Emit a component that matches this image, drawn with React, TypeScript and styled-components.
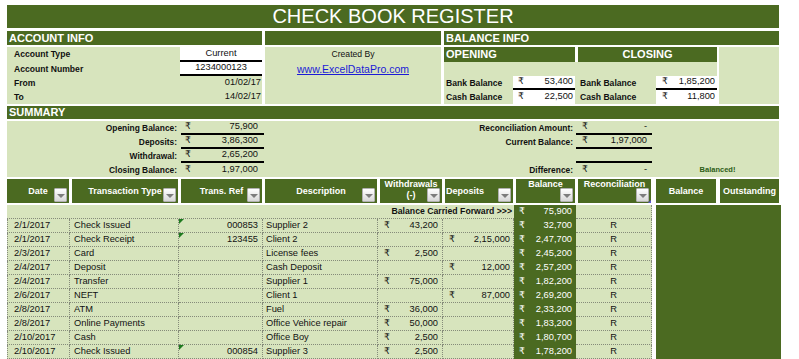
import React from "react";
import styled, { createGlobalStyle } from "styled-components";

const DARK = "#4b6a21";
const LIGHT = "#d7e4bd";
const DOT = "#858b7a";
const SANS = `"Liberation Sans", Arial, "DejaVu Sans", sans-serif`;

const GlobalStyle = createGlobalStyle`
  html, body { margin: 0; padding: 0; background: #ffffff; overflow: hidden; }
  body { font-family: ${SANS}; color: #111111; }
  #root { width: 799px; height: 359px; }
`;

const Sheet = styled.main`
  box-sizing: border-box;
  width: 799px;
  height: 359px;
  padding: 5px 0 0 7px;
  display: flex;
  flex-direction: column;
  overflow: hidden;
`;

const TitleBar = styled.h1`
  margin: 0 0 3px;
  width: 772px;
  height: 23px;
  flex: none;
  background: ${DARK};
  color: #ffffff;
  font: 400 20px/23px ${SANS};
  text-align: center;
`;

const BarRow = styled.div`
  display: flex;
  gap: 3px;
  flex: none;
  margin-bottom: 2px;
`;

const SectionBar = styled.div<{ $w: number; $h?: number }>`
  width: ${(p) => p.$w}px;
  height: ${(p) => p.$h ?? 14}px;
  flex: none;
  box-sizing: border-box;
  padding-left: 2px;
  background: ${DARK};
  color: #ffffff;
  font: 700 11px/${(p) => p.$h ?? 14}px ${SANS};
`;

/* ---------- account / balance info ---------- */

const InfoRow = styled.div`
  display: flex;
  gap: 3px;
  height: 57px;
  flex: none;
  margin-bottom: 2px;
`;

const AccountPanel = styled.div`
  width: 255px;
  flex: none;
  background: ${LIGHT};
  display: grid;
  grid-template-columns: 173px 82px;
  grid-template-rows: 15px 14px 14px 14px;
`;

const FieldLabel = styled.div`
  display: flex;
  align-items: center;
  padding-left: 7px;
  font: 700 8.6px/1 ${SANS};
`;

const FieldValue = styled.div<{ $boxed?: boolean; $underline?: boolean; $right?: boolean }>`
  box-sizing: border-box;
  display: flex;
  align-items: center;
  justify-content: ${(p) => (p.$right ? "flex-end" : "center")};
  padding-right: ${(p) => (p.$right ? 1 : 0)}px;
  background: ${(p) => (p.$boxed ? "#ffffff" : "transparent")};
  border-bottom: ${(p) => (p.$underline ? "2px solid #000000" : "none")};
  font: 400 9.3px/1 ${SANS};
`;

const CreatorPanel = styled.div`
  width: 176px;
  flex: none;
  background: ${LIGHT};
  display: grid;
  grid-template-rows: 15px 14px 14px 14px;
  justify-items: center;
  align-items: center;
`;

const CreatedBy = styled.div`
  font: 400 8.6px/1 ${SANS};
`;

const SiteLink = styled.a`
  color: #1b1bd6;
  text-decoration: underline;
  font: 400 10.5px/1 ${SANS};
`;

const BalancePanel = styled.div`
  width: 335px;
  flex: none;
  display: flex;
  gap: 2px;
`;

const BalanceGrid = styled.div`
  width: 273px;
  flex: none;
  background: ${LIGHT};
  display: grid;
  grid-template-columns: 69px 62px 3px 78px 61px;
  grid-template-rows: 15px 14px 14px 14px;
`;

const SubHeader = styled.div<{ $center?: boolean }>`
  grid-column: span 2;
  display: flex;
  align-items: center;
  justify-content: ${(p) => (p.$center ? "center" : "flex-start")};
  padding-left: ${(p) => (p.$center ? 0 : 2)}px;
  background: ${DARK};
  color: #ffffff;
  font: 700 11px/1 ${SANS};
`;

const HeaderGap = styled.div`
  background: #ffffff;
`;

const EmptyLine = styled.div`
  grid-column: 1 / -1;
`;

const BalanceLabel = styled.div`
  display: flex;
  align-items: center;
  padding-left: 2px;
  font: 700 8.6px/1 ${SANS};
  white-space: nowrap;
`;

const MoneyBox = styled.div<{ $underline?: boolean; $pl: number }>`
  box-sizing: border-box;
  display: flex;
  align-items: center;
  justify-content: space-between;
  padding: 0 2px 0 ${(p) => p.$pl}px;
  background: #ffffff;
  border-bottom: ${(p) => (p.$underline ? "2px solid #000000" : "none")};
  font: 400 9.3px/1 ${SANS};
`;

const Spacer = styled.div``;

const BalanceSide = styled.div`
  width: 60px;
  flex: none;
  background: ${LIGHT};
`;

/* ---------- summary ---------- */

const SummaryBody = styled.div`
  width: 772px;
  height: 56px;
  flex: none;
  margin-bottom: 2px;
  background: ${LIGHT};
  display: grid;
  grid-template-columns: 174px 83px 312px 76px 127px;
  grid-template-rows: repeat(4, 14px);
`;

const SumLabel = styled.div<{ $pr: number }>`
  display: flex;
  align-items: center;
  justify-content: flex-end;
  padding-right: ${(p) => p.$pr}px;
  font: 700 8.4px/1 ${SANS};
  white-space: nowrap;
`;

const SumValue = styled.div<{ $underline?: boolean; $pl: number; $pr: number }>`
  box-sizing: border-box;
  display: flex;
  align-items: center;
  justify-content: space-between;
  padding: 0 ${(p) => p.$pr}px 0 ${(p) => p.$pl}px;
  border-bottom: ${(p) => (p.$underline ? "2px solid #000000" : "none")};
  font: 400 9.3px/1 ${SANS};
`;

const StatusNote = styled.div`
  display: flex;
  align-items: center;
  justify-content: center;
  padding-left: 4px;
  color: #2c5d16;
  font: 700 7.5px/1 ${SANS};
`;

const Blank = styled.div``;

/* ---------- ledger header ---------- */

const HeadRow = styled.div`
  display: flex;
  gap: 3px;
  height: 24px;
  flex: none;
  margin-bottom: 2px;
`;

const HeadCell = styled.div<{ $w: number; $ml?: number }>`
  width: ${(p) => p.$w}px;
  flex: none;
  margin-left: ${(p) => p.$ml ?? 0}px;
  background: ${DARK};
  color: #ffffff;
  display: grid;
  grid-template: 1fr / 1fr;
  font: 700 9px/11px ${SANS};
  & > * {
    grid-area: 1 / 1;
  }
`;

const HeadText = styled.div<{ $top?: boolean; $left?: boolean }>`
  align-self: ${(p) => (p.$top ? "start" : "center")};
  text-align: ${(p) => (p.$left ? "left" : "center")};
  padding-left: ${(p) => (p.$left ? 1 : 0)}px;
  white-space: nowrap;
`;

const FilterButton = styled.span`
  justify-self: end;
  align-self: end;
  width: 13px;
  height: 14px;
  margin: 0 2px 1px 0;
  box-sizing: border-box;
  border: 1px solid #b0b0b0;
  border-radius: 1px;
  background: linear-gradient(#ffffff, #d8d8d8);
  display: flex;
  align-items: center;
  justify-content: center;
  &::after {
    content: "";
    margin-top: 1px;
    border-left: 4px solid transparent;
    border-right: 4px solid transparent;
    border-top: 4px solid #7d7d7d;
  }
`;

const SelectionMark = styled.span`
  justify-self: end;
  align-self: end;
  width: 0;
  height: 0;
  border-left: 3px solid transparent;
  border-bottom: 3px solid #5b55d0;
`;

/* ---------- ledger body ---------- */

const BodyArea = styled.div`
  display: flex;
  gap: 4px;
  flex: 1;
  min-height: 0;
`;

const Ledger = styled.div`
  width: 645px;
  flex: none;
  align-self: flex-start;
  display: grid;
  grid-template-columns: 63px 109px 84px 115px 65px 71px 62px 76px;
  grid-auto-rows: 14px;
  background: ${LIGHT};
  font: 400 9.3px/1 ${SANS};
`;

const CarryLabel = styled.div`
  grid-column: 1 / span 6;
  box-sizing: border-box;
  display: flex;
  align-items: center;
  justify-content: flex-end;
  padding-right: 2px;
  border-bottom: 1px dotted ${DOT};
  font: 700 8.7px/1 ${SANS};
  white-space: nowrap;
`;

type Justify = "flex-start" | "flex-end" | "center" | "space-between";

const Cell = styled.div<{
  $justify: Justify;
  $pl?: number;
  $pr?: number;
  $first?: boolean;
  $dark?: boolean;
}>`
  box-sizing: border-box;
  display: flex;
  align-items: center;
  justify-content: ${(p) => p.$justify};
  padding: 0 ${(p) => p.$pr ?? 0}px 0 ${(p) => p.$pl ?? 0}px;
  border-right: 1px dotted ${(p) => (p.$dark ? "transparent" : DOT)};
  border-bottom: 1px dotted ${(p) => (p.$dark ? "transparent" : DOT)};
  border-left: ${(p) => (p.$first ? `1px dotted ${DOT}` : "none")};
  background: ${(p) => (p.$dark ? DARK : "transparent")};
  color: ${(p) => (p.$dark ? "#ffffff" : "#111111")};
  white-space: nowrap;
  overflow: hidden;
`;

const RefCell = styled.div`
  box-sizing: border-box;
  display: grid;
  grid-template: 1fr / 1fr;
  border-right: 1px dotted ${DOT};
  border-bottom: 1px dotted ${DOT};
  & > * {
    grid-area: 1 / 1;
  }
`;

const RefText = styled.span`
  justify-self: end;
  align-self: center;
  padding-right: 4px;
`;

const CommentFlag = styled.span`
  justify-self: start;
  align-self: start;
  width: 0;
  height: 0;
  border-top: 5px solid #1e7a1e;
  border-right: 5px solid transparent;
`;

const RemainingBlock = styled.div`
  width: 125px;
  flex: none;
  background: ${DARK};
`;

type Entry = {
  date: string;
  type: string;
  ref?: string;
  desc: string;
  w?: string;
  d?: string;
  bal: string;
};

const entries: Entry[] = [
  { date: "2/1/2017", type: "Check Issued", ref: "000853", desc: "Supplier 2", w: "43,200", bal: "32,700" },
  { date: "2/1/2017", type: "Check Receipt", ref: "123455", desc: "Client 2", d: "2,15,000", bal: "2,47,700" },
  { date: "2/3/2017", type: "Card", desc: "License fees", w: "2,500", bal: "2,45,200" },
  { date: "2/4/2017", type: "Deposit", desc: "Cash Deposit", d: "12,000", bal: "2,57,200" },
  { date: "2/4/2017", type: "Transfer", desc: "Supplier 1", w: "75,000", bal: "1,82,200" },
  { date: "2/6/2017", type: "NEFT", desc: "Client 1", d: "87,000", bal: "2,69,200" },
  { date: "2/8/2017", type: "ATM", desc: "Fuel", w: "36,000", bal: "2,33,200" },
  { date: "2/8/2017", type: "Online Payments", desc: "Office Vehice repair", w: "50,000", bal: "1,83,200" },
  { date: "2/10/2017", type: "Cash", desc: "Office Boy", w: "2,500", bal: "1,80,700" },
  { date: "2/10/2017", type: "Check Issued", ref: "000854", desc: "Supplier 3", w: "2,500", bal: "1,78,200" },
];

const R = "₹";

function Money({ value }: { value: string }) {
  return (
    <>
      <span>{R}</span>
      <span>{value}</span>
    </>
  );
}

export default function App() {
  return (
    <>
      <GlobalStyle />
      <Sheet>
        <TitleBar>CHECK BOOK REGISTER</TitleBar>

        <BarRow>
          <SectionBar $w={255}>ACCOUNT INFO</SectionBar>
          <SectionBar $w={176} />
          <SectionBar $w={335}>BALANCE INFO</SectionBar>
        </BarRow>

        <InfoRow>
          <AccountPanel>
            <FieldLabel>Account Type</FieldLabel>
            <FieldValue $boxed $underline>Current</FieldValue>
            <FieldLabel>Account Number</FieldLabel>
            <FieldValue $boxed $underline>1234000123</FieldValue>
            <FieldLabel>From</FieldLabel>
            <FieldValue $right>01/02/17</FieldValue>
            <FieldLabel>To</FieldLabel>
            <FieldValue $right>14/02/17</FieldValue>
          </AccountPanel>

          <CreatorPanel>
            <CreatedBy>Created By</CreatedBy>
            <SiteLink href="#">www.ExcelDataPro.com</SiteLink>
          </CreatorPanel>

          <BalancePanel>
            <BalanceGrid>
              <SubHeader>OPENING</SubHeader>
              <HeaderGap />
              <SubHeader $center>CLOSING</SubHeader>
              <EmptyLine />
              <BalanceLabel>Bank Balance</BalanceLabel>
              <MoneyBox $underline $pl={5}>
                <Money value="53,400" />
              </MoneyBox>
              <Spacer />
              <BalanceLabel>Bank Balance</BalanceLabel>
              <MoneyBox $underline $pl={6}>
                <Money value="1,85,200" />
              </MoneyBox>
              <BalanceLabel>Cash Balance</BalanceLabel>
              <MoneyBox $pl={5}>
                <Money value="22,500" />
              </MoneyBox>
              <Spacer />
              <BalanceLabel>Cash Balance</BalanceLabel>
              <MoneyBox $pl={6}>
                <Money value="11,800" />
              </MoneyBox>
            </BalanceGrid>
            <BalanceSide />
          </BalancePanel>
        </InfoRow>

        <BarRow>
          <SectionBar $w={772} $h={13}>SUMMARY</SectionBar>
        </BarRow>

        <SummaryBody>
          <SumLabel $pr={4}>Opening Balance:</SumLabel>
          <SumValue $underline $pl={4} $pr={6}>
            <Money value="75,900" />
          </SumValue>
          <SumLabel $pr={3}>Reconciliation Amount:</SumLabel>
          <SumValue $underline $pl={6} $pr={5}>
            <Money value="-" />
          </SumValue>
          <Blank />

          <SumLabel $pr={4}>Deposits:</SumLabel>
          <SumValue $underline $pl={4} $pr={6}>
            <Money value="3,86,300" />
          </SumValue>
          <SumLabel $pr={3}>Current Balance:</SumLabel>
          <SumValue $underline $pl={6} $pr={5}>
            <Money value="1,97,000" />
          </SumValue>
          <Blank />

          <SumLabel $pr={4}>Withdrawal:</SumLabel>
          <SumValue $underline $pl={4} $pr={6}>
            <Money value="2,65,200" />
          </SumValue>
          <Blank />
          <SumValue $underline $pl={6} $pr={5} />
          <Blank />

          <SumLabel $pr={4}>Closing Balance:</SumLabel>
          <SumValue $pl={4} $pr={6}>
            <Money value="1,97,000" />
          </SumValue>
          <SumLabel $pr={3}>Difference:</SumLabel>
          <SumValue $pl={6} $pr={5}>
            <Money value="-" />
          </SumValue>
          <StatusNote>Balanced!</StatusNote>
        </SummaryBody>

        <HeadRow>
          <HeadCell $w={62}>
            <HeadText>Date</HeadText>
            <FilterButton />
          </HeadCell>
          <HeadCell $w={106}>
            <HeadText>Transaction Type</HeadText>
            <FilterButton />
          </HeadCell>
          <HeadCell $w={81}>
            <HeadText>Trans. Ref</HeadText>
            <FilterButton />
          </HeadCell>
          <HeadCell $w={112}>
            <HeadText>Description</HeadText>
            <FilterButton />
          </HeadCell>
          <HeadCell $w={62}>
            <HeadText $top>
              Withdrawals
              <br />
              (-)
            </HeadText>
            <FilterButton />
          </HeadCell>
          <HeadCell $w={68}>
            <HeadText $left>Deposits</HeadText>
            <FilterButton />
          </HeadCell>
          <HeadCell $w={59}>
            <HeadText $top>Balance</HeadText>
            <FilterButton />
          </HeadCell>
          <HeadCell $w={73}>
            <HeadText $top>Reconciliation</HeadText>
            <FilterButton />
            <SelectionMark />
          </HeadCell>
          <HeadCell $w={60} $ml={2}>
            <HeadText>Balance</HeadText>
          </HeadCell>
          <HeadCell $w={59} $ml={1}>
            <HeadText>Outstanding</HeadText>
          </HeadCell>
        </HeadRow>

        <BodyArea>
          <Ledger>
            <CarryLabel>Balance Carried Forward &gt;&gt;&gt;</CarryLabel>
            <Cell $justify="space-between" $pl={5} $pr={3} $dark>
              <Money value="75,900" />
            </Cell>
            <Cell $justify="center" />

            {entries.map((e, i) => (
              <React.Fragment key={i}>
                <Cell $justify="flex-start" $pl={6} $first>
                  {e.date}
                </Cell>
                <Cell $justify="flex-start" $pl={4}>
                  {e.type}
                </Cell>
                <RefCell>
                  {e.ref && <CommentFlag />}
                  <RefText>{e.ref ?? ""}</RefText>
                </RefCell>
                <Cell $justify="flex-start" $pl={3}>
                  {e.desc}
                </Cell>
                <Cell $justify="space-between" $pl={6} $pr={4}>
                  {e.w && <Money value={e.w} />}
                </Cell>
                <Cell $justify="space-between" $pl={6} $pr={3}>
                  {e.d && <Money value={e.d} />}
                </Cell>
                <Cell $justify="space-between" $pl={5} $pr={3} $dark>
                  <Money value={e.bal} />
                </Cell>
                <Cell $justify="center">R</Cell>
              </React.Fragment>
            ))}
          </Ledger>
          <RemainingBlock />
        </BodyArea>
      </Sheet>
    </>
  );
}
